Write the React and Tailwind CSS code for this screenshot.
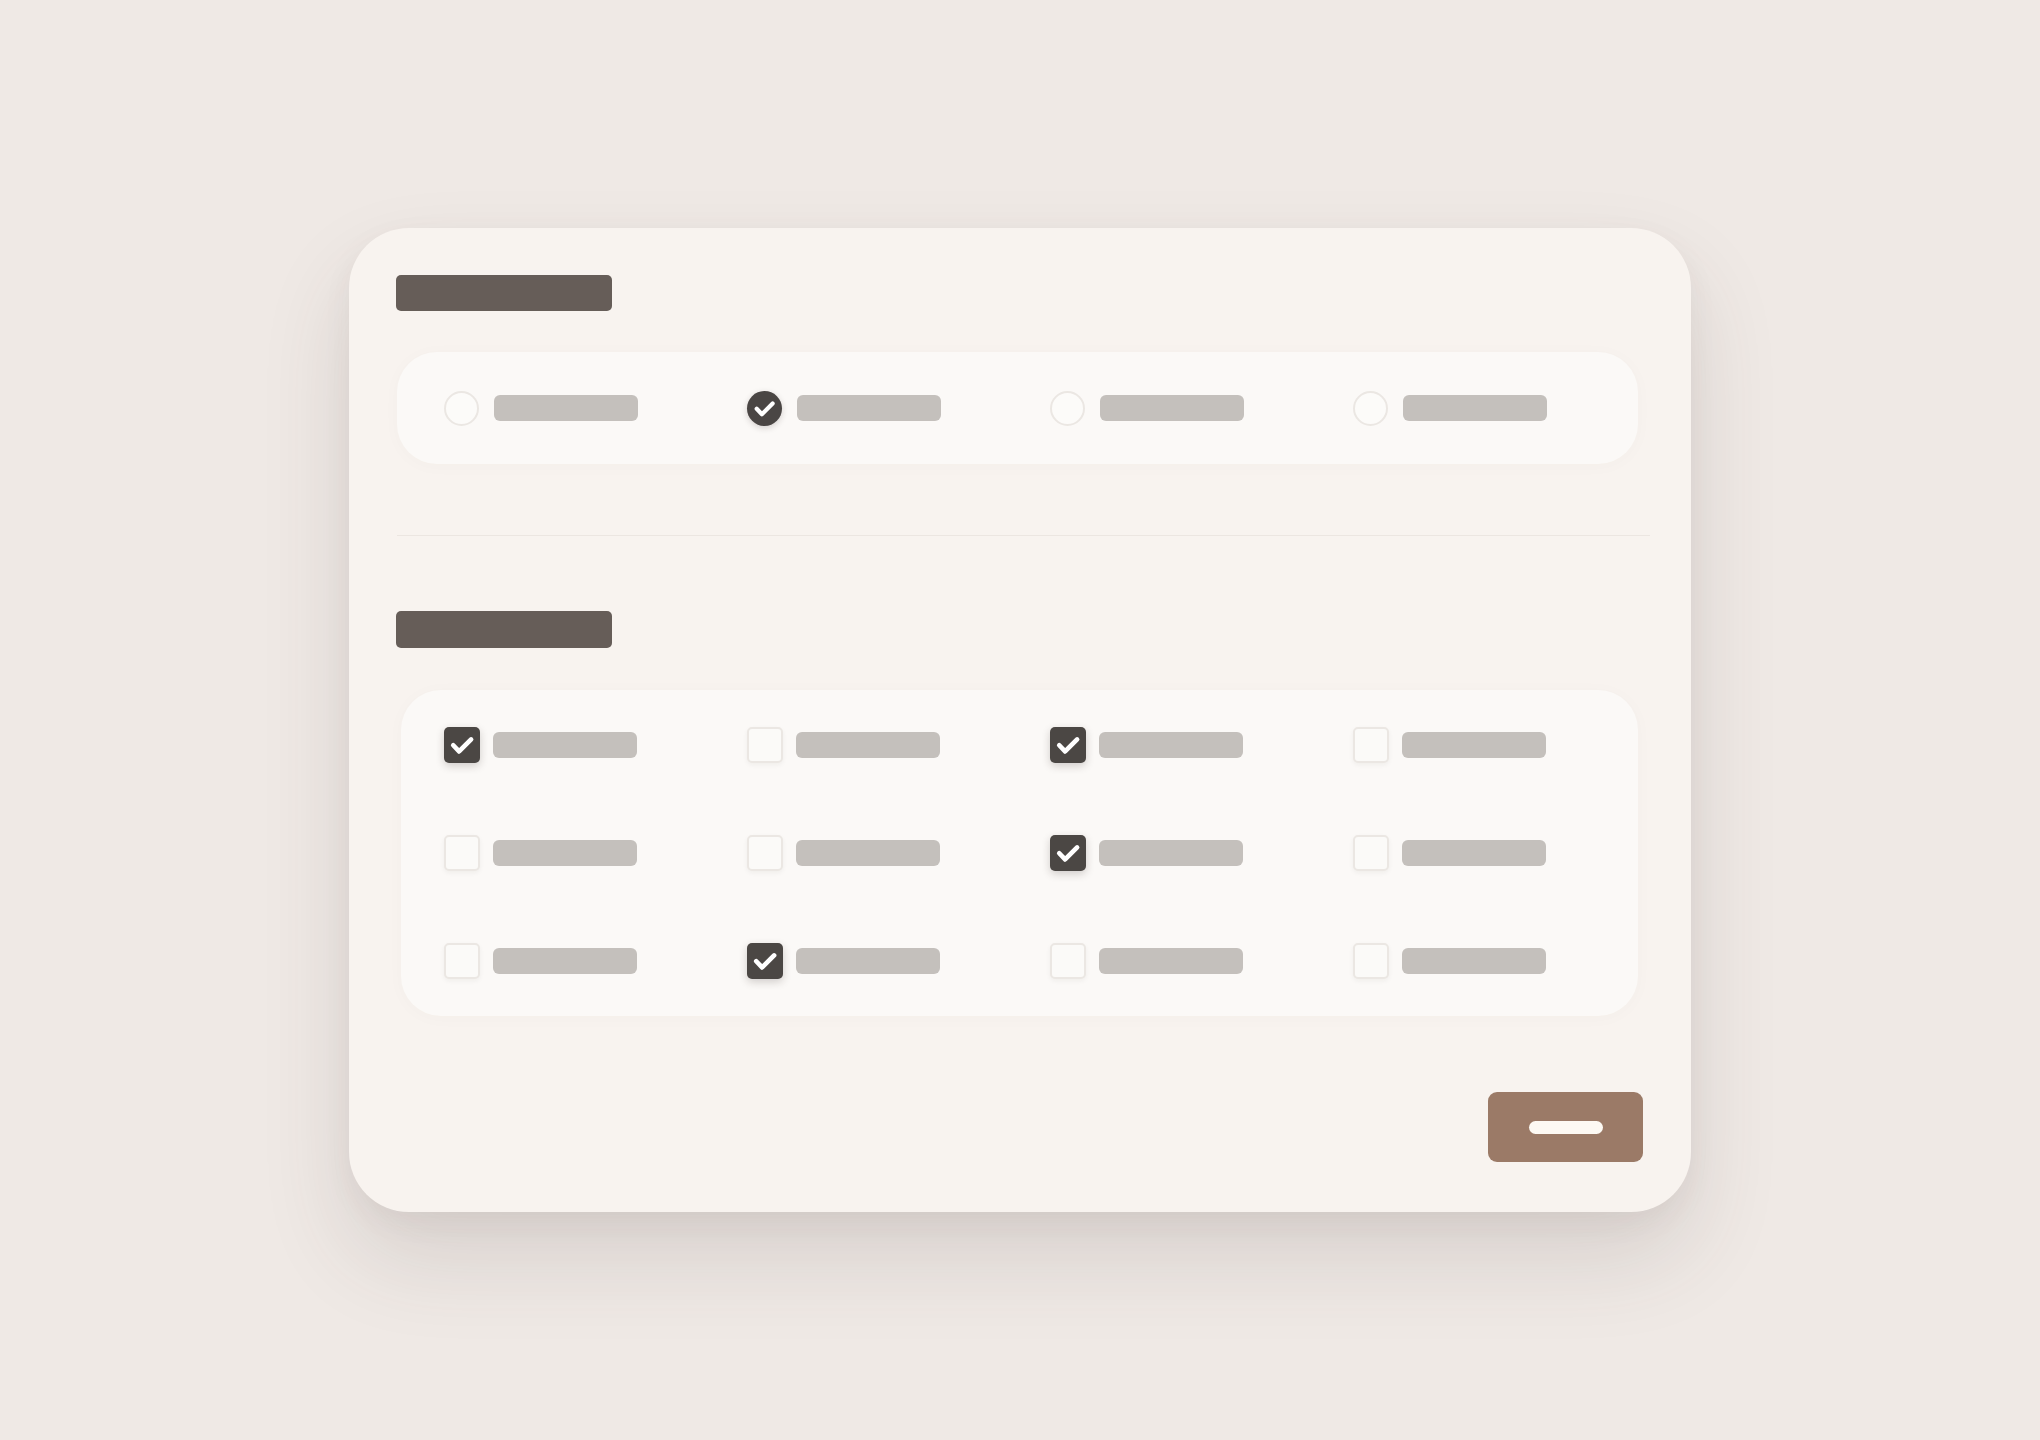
import React, { useState } from 'react'

const radioOptions = [0, 1, 2, 3]

const initialChecks = [
  true, false, true, false,
  false, false, true, false,
  false, true, false, false,
]

const CheckMark = ({ className = '' }) => (
  <svg viewBox="0 0 24 24" className={className} fill="none">
    <path d="M4.5 12.2l5 5.3L19.8 7.2" stroke="#ffffff" strokeWidth="4" strokeLinecap="round" strokeLinejoin="round" />
  </svg>
)

const LabelBar = () => (
  <div className="w-[144px] h-[26px] rounded-[6px] bg-[#c4c0bc]" />
)

const Radio = ({ checked, onClick }) => (
  <button
    type="button"
    onClick={onClick}
    className={`w-[35px] h-[35px] rounded-full flex items-center justify-center flex-shrink-0 ${
      checked
        ? 'bg-[#4a4644] shadow-[0_2px_6px_rgba(40,30,25,0.18)]'
        : 'bg-[#fcfbf9] border-2 border-[#ebe7e3]'
    }`}
  >
    {checked && <CheckMark className="w-[25px] h-[25px]" />}
  </button>
)

const Checkbox = ({ checked, onClick }) => (
  <button
    type="button"
    onClick={onClick}
    className={`w-[36px] h-[36px] rounded-[5px] flex items-center justify-center flex-shrink-0 ${
      checked
        ? 'bg-[#4b4744] shadow-[0_3px_8px_rgba(40,30,25,0.2)]'
        : 'bg-[#fbfaf8] border-2 border-[#ebe7e3] shadow-[0_2px_5px_rgba(40,30,25,0.05)]'
    }`}
  >
    {checked && <CheckMark className="w-[28px] h-[28px]" />}
  </button>
)

export default function App() {
  const [selected, setSelected] = useState(1)
  const [checks, setChecks] = useState(initialChecks)

  const toggle = (i) => setChecks(prev => prev.map((c, idx) => (idx === i ? !c : c)))

  return (
    <div className="w-[2040px] h-[1440px] bg-[#efe9e5] flex items-center justify-center font-['Inter',sans-serif]">
      <div className="w-[1342px] h-[984px] rounded-[60px] bg-[#f8f3ef] shadow-[0_45px_90px_rgba(70,60,55,0.14),0_10px_30px_rgba(70,60,55,0.05)] pt-[47px] pl-[47px] pr-[41px] pb-[50px] flex flex-col">
        {/* Radio group */}
        <div className="w-[216px] h-[36px] rounded-[5px] bg-[#665d58]" />
        <div className="mt-[41px] ml-[1px] w-[1241px] h-[112px] rounded-[40px] bg-[#fbf9f7] shadow-[0_2px_18px_rgba(90,70,60,0.025)] pl-[47px] grid grid-cols-[repeat(4,303px)] items-center">
          {radioOptions.map((i) => (
            <div key={i} className="flex items-center gap-[15px]">
              <Radio checked={selected === i} onClick={() => setSelected(i)} />
              <LabelBar />
            </div>
          ))}
        </div>

        <div className="mt-[71px] ml-[1px] h-px bg-[#ece6e1]" />

        {/* Checkbox group */}
        <div className="mt-[75px] w-[216px] h-[37px] rounded-[5px] bg-[#665d58]" />
        <div className="mt-[42px] ml-[5px] w-[1237px] rounded-[40px] bg-[#fbf9f7] shadow-[0_2px_18px_rgba(90,70,60,0.025)] pl-[43px] py-[37px] grid grid-cols-[repeat(4,303px)] gap-y-[72px]">
          {checks.map((c, i) => (
            <div key={i} className="flex items-center gap-[13px]">
              <Checkbox checked={c} onClick={() => toggle(i)} />
              <LabelBar />
            </div>
          ))}
        </div>

        <div className="mt-auto flex justify-end pr-[7px]">
          <button
            type="button"
            className="w-[155px] h-[70px] rounded-[9px] bg-[#9b7a67] flex items-center justify-center"
          >
            <span className="w-[74px] h-[13px] rounded-full bg-[#fdf9f3]" />
          </button>
        </div>
      </div>
    </div>
  )
}
